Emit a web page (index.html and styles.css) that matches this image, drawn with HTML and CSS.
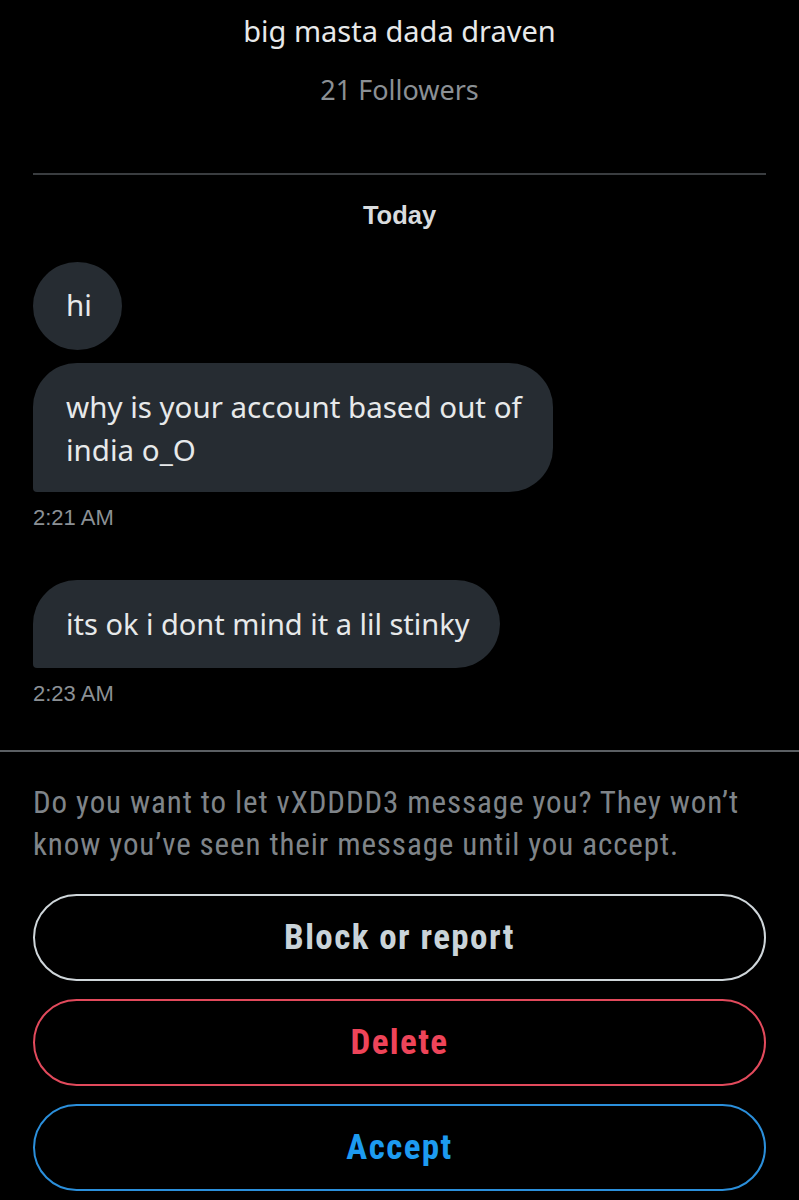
FILE: index.html
```html
<!DOCTYPE html>
<html>
<head>
<meta charset="utf-8">
<link rel="stylesheet" href="styles.css">
</head>
<body>
<div class="page">
  <header class="profile">
    <div class="name">big masta dada draven</div>
    <div class="followers">21 Followers</div>
  </header>
  <div class="chat">
    <div class="day">Today</div>
    <div class="msgs">
      <div class="bubble round">hi</div>
      <div class="bubble last">why is your account based out of<br>india o_O</div>
      <div class="time">2:21 AM</div>
      <div class="bubble last single">its ok i dont mind it a lil stinky</div>
      <div class="time">2:23 AM</div>
    </div>
  </div>
  <footer class="request">
    <p class="notice">Do you want to let vXDDDD3 message you? They won’t know you’ve seen their message until you accept.</p>
    <div class="actions">
      <button class="btn block">Block or report</button>
      <button class="btn delete">Delete</button>
      <button class="btn accept">Accept</button>
    </div>
  </footer>
</div>
</body>
</html>
```
FILE: styles.css
```css
html, body { margin: 0; padding: 0; background: #000; }
body { font-family: "Noto Sans", "Open Sans", sans-serif; color: #e7e9ea; width: 799px; height: 1200px; overflow: hidden; }
.page { display: flex; flex-direction: column; }
.profile { display: flex; flex-direction: column; align-items: center; padding: 11px 0 0; margin: 0 33px; border-bottom: 2px solid #3a3d40; height: 175px; box-sizing: border-box; }
.name { font-size: 29px; line-height: 40px; color: #e7e9ea; }
.followers { font-size: 27px; line-height: 40px; margin-top: 19px; color: #8b9095; }
.chat { padding: 0 33px; height: 577px; box-sizing: border-box; border-bottom: 2px solid #5b5f63; }
.day { text-align: center; font-family: "Liberation Sans", sans-serif; font-weight: bold; font-size: 25.5px; line-height: 30px; margin-top: 25px; color: #d9dcde; }
.msgs { display: flex; flex-direction: column; align-items: flex-start; margin-top: 32px; }
.bubble { background: #262c32; color: #e7e9ea; font-size: 29.5px; line-height: 43px; padding: 22px 31px 21px 33px; border-radius: 44px 44px 44px 4px; }
.bubble.round { width: 89px; height: 88px; box-sizing: border-box; padding: 0 0 0 33px; line-height: 86px; border-radius: 50%; margin-bottom: 13px; }
.bubble.single { padding: 22px 30px 23px 33px; font-size: 29px; }
.time { font-family: "Liberation Sans", sans-serif; font-size: 22px; line-height: 24px; color: #8b9095; margin-top: 14px; margin-bottom: 50px; }
.request { padding: 0 33px; }
.notice { margin: 30px 0 0; font-family: "Roboto Condensed", "Liberation Sans Narrow", "Liberation Sans", sans-serif; font-size: 31px; letter-spacing: 0.9px; line-height: 42px; color: #7f8489; }
.actions { display: flex; flex-direction: column; gap: 18px; margin-top: 28px; }
.btn { height: 87px; border-radius: 44px; background: #000; border: 2px solid; font-family: "Roboto Condensed", "Liberation Sans Narrow", "Liberation Sans", sans-serif; font-weight: bold; font-size: 35px; letter-spacing: 1.4px; }
.btn.block { border-color: #cfd6da; color: #c9d3d9; }
.btn.delete { border-color: #e24a5c; color: #ee4459; }
.btn.accept { border-color: #2b8fdb; color: #1d9bf0; }
```
